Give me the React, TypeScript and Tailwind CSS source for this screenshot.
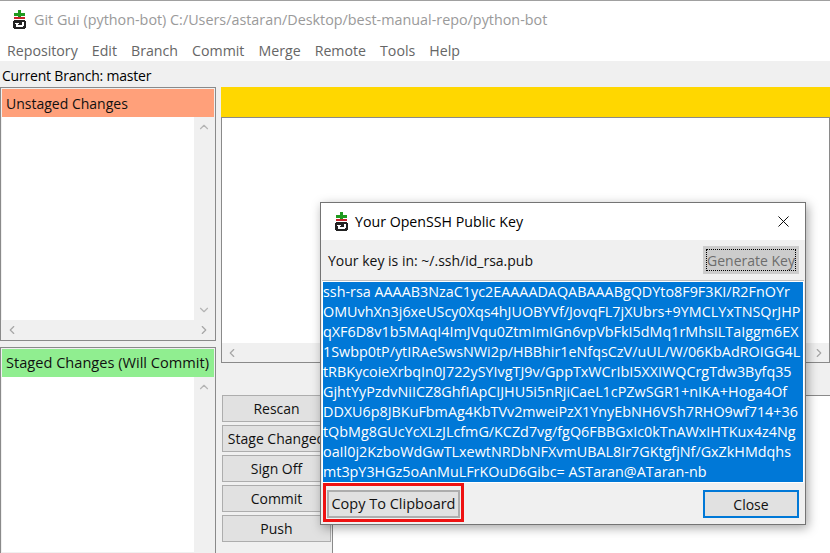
import { ChevronDown, ChevronLeft, ChevronRight, ChevronUp, X } from "lucide-react";

const FONT = "font-['Open_Sans','Noto_Sans',sans-serif]";

const KEY_LINES = [
  "ssh-rsa AAAAB3NzaC1yc2EAAAADAQABAAABgQDYto8F9F3KI/R2FnOYr",
  "OMUvhXn3j6xeUScy0Xqs4hJUOBYVf/JovqFL7jXUbrs+9YMCLYxTNSQrJHP",
  "qXF6D8v1b5MAqI4ImJVqu0ZtmImIGn6vpVbFkI5dMq1rMhsILTaIggm6EX",
  "1Swbp0tP/ytIRAeSwsNWi2p/HBBhir1eNfqsCzV/uUL/W/06KbAdROIGG4L",
  "tRBKycoieXrbqIn0J722ySYIvgTJ9v/GppTxWCrIbI5XXIWQCrgTdw3Byfq35",
  "GjhtYyPzdvNiICZ8GhfIApCIJHU5i5nRjiCaeL1cPZwSGR1+nIKA+Hoga4Of",
  "DDXU6p8JBKuFbmAg4KbTVv2mweiPzX1YnyEbNH6VSh7RHO9wf714+36",
  "tQbMg8GUcYcXLzJLcfmG/KCZd7vg/fgQ6FBBGxIc0kTnAWxIHTKux4z4Ng",
  "oaIl0j2KzboWdGwTLxewtNRDbNFXvmUBAL8Ir7GKtgfjNf/GxZkHMdqhs",
  "mt3pY3HGz5oAnMuLFrKOuD6Gibc= ASTaran@ATaran-nb",
];

const MENU = ["Repository", "Edit", "Branch", "Commit", "Merge", "Remote", "Tools", "Help"];
const ACTIONS = ["Rescan", "Stage Changed", "Sign Off", "Commit", "Push"];

// Pixel-art git gui icon: green plus, red bar, black box with a white return arrow.
function GitIcon() {
  return (
    <svg width="15" height="20" viewBox="0 0 15 20" shapeRendering="crispEdges" className="shrink-0">
      <rect x="6" y="0" width="3" height="7" fill="#1f9a1f" />
      <rect x="2" y="3" width="11" height="3" fill="#1f9a1f" />
      <rect x="2" y="7" width="11" height="2" fill="#c8242c" />
      <rect x="2" y="10" width="11" height="9" fill="#222" />
      <rect x="1" y="11" width="13" height="7" fill="#222" />
      <rect x="5" y="15" width="6" height="2" fill="#fff" />
      <rect x="10" y="12" width="2" height="4" fill="#fff" />
      <rect x="4" y="13" width="2" height="4" fill="#fff" />
      <rect x="3" y="13" width="4" height="1" fill="#fff" />
    </svg>
  );
}

function Hbar() {
  return (
    <div className="flex h-[19px] shrink-0 items-center justify-between bg-[#f0f0f0] px-[3px] text-[#a6a6a6]">
      <ChevronLeft size={14} strokeWidth={2} />
      <ChevronRight size={14} strokeWidth={2} />
    </div>
  );
}

function FileList({ title, color, bottomBar }: { title: string; color: string; bottomBar: boolean }) {
  return (
    <div className={`flex min-h-0 flex-col border border-[#8a8a8a] p-px ${bottomBar ? "h-[254px]" : "flex-1 border-b-0"}`}>
      <div className={`flex h-[28px] shrink-0 items-center whitespace-nowrap pl-[4px] ${color}`}>{title}</div>
      <div className="flex min-h-0 flex-1">
        <div className="flex-1 bg-white" />
        <div className="flex w-[20px] flex-col items-center justify-between bg-[#f0f0f0] py-[3px] text-[#b4b4b4]">
          <ChevronUp size={14} strokeWidth={2} />
          {bottomBar && <ChevronDown size={14} strokeWidth={2} />}
        </div>
      </div>
      {bottomBar && <Hbar />}
    </div>
  );
}

function KeyDialog() {
  return (
    <div className="absolute left-[320px] top-[202px] flex h-[323px] w-[486px] flex-col border border-[#747474] bg-[#f0f0f0] text-[14px] shadow-[2px_3px_10px_rgba(0,0,0,0.35)]">
      <div className="flex h-[37px] shrink-0 items-center bg-white pl-[13px] pr-[12px] text-black">
        <GitIcon />
        <span className="ml-[6px] flex-1 text-[14.2px]">Your OpenSSH Public Key</span>
        <X size={19} strokeWidth={1.2} />
      </div>
      <div className="flex h-[40px] shrink-0 items-center justify-between pl-[7px] pr-[6px]">
        <span>Your key is in: ~/.ssh/id_rsa.pub</span>
        <div className="flex h-[28px] w-[96px] items-center justify-center bg-[#cccccc] p-[3px] text-[#6d6d6d]">
          <div className="flex h-full w-full items-center justify-center border border-dotted border-black">Generate Key</div>
        </div>
      </div>
      <div className="mx-px shrink-0 border-t border-[#c0c0c0] bg-white p-px">
        <div className="h-[200px] overflow-hidden bg-[#0078d7] text-[14.35px] text-white">
          {KEY_LINES.map((line) => (
            <div key={line} className="h-[20px] whitespace-nowrap leading-[20px]">{line}</div>
          ))}
        </div>
      </div>
      <div className="flex flex-1 items-start justify-between pl-[2px] pr-[6px]">
        <div className="h-[39px] w-[141px] border-[3px] border-[#ee1111] px-px pb-px pt-[4px]">
          <div className="flex h-[28px] w-full items-center justify-center border-2 border-[#adadad] bg-[#e1e1e1] text-[14.5px]">Copy To Clipboard</div>
        </div>
        <div className="mt-[7px] flex h-[28px] w-[96px] items-center justify-center border-2 border-[#0078d7] bg-[#e1e1e1]">Close</div>
      </div>
    </div>
  );
}

export default function App() {
  return (
    <div className={`relative flex h-[553px] w-[830px] flex-col overflow-hidden bg-[#f0f0f0] text-[14px] text-[#111] ${FONT}`}>
      <div className="h-px shrink-0 bg-[#a0a0a0]" />
      <div className="flex h-[39px] shrink-0 items-center bg-white pb-[2px] pl-[12px] text-[14.35px] text-[#9a9a9a]">
        <GitIcon />
        <span className="ml-[7px] whitespace-nowrap">Git Gui (python-bot) C:/Users/astaran/Desktop/best-manual-repo/python-bot</span>
      </div>
      <div className="flex h-[21px] shrink-0 items-center gap-[14px] bg-white pl-[7px] text-[14.2px] text-[#666]">
        {MENU.map((m) => (
          <span key={m}>{m}</span>
        ))}
      </div>
      <div className="flex h-[26px] shrink-0 items-center pl-[2px] pt-[2px] tracking-[-0.2px] text-black">Current Branch: master</div>
      <div className="flex min-h-0 flex-1">
        <div className="flex w-[216px] shrink-0 flex-col gap-[6px]">
          <FileList title="Unstaged Changes" color="bg-[#ffa07a]" bottomBar />
          <FileList title="Staged Changes (Will Commit)" color="bg-[#90ee90] text-[14.6px]" bottomBar={false} />
        </div>
        <div className="ml-[5px] flex min-w-0 flex-1 flex-col">
          <div className="h-[30px] shrink-0 bg-[#ffd700]" />
          <div className="flex h-[246px] shrink-0 flex-col border border-[#8a8a8a] bg-white">
            <div className="flex-1" />
            <Hbar />
          </div>
          <div className="flex min-h-0 flex-1 pt-[32px]">
            <div className="flex w-[110px] shrink-0 flex-col gap-[3px] pl-px">
              {ACTIONS.map((a) => (
                <div key={a} className="flex h-[27px] items-center justify-center overflow-hidden whitespace-nowrap border border-[#adadad] bg-[#e1e1e1]">
                  {a}
                </div>
              ))}
            </div>
            <div className="ml-px flex-1 border-l border-t border-[#8a8a8a] bg-white" />
          </div>
        </div>
      </div>
      <KeyDialog />
    </div>
  );
}
